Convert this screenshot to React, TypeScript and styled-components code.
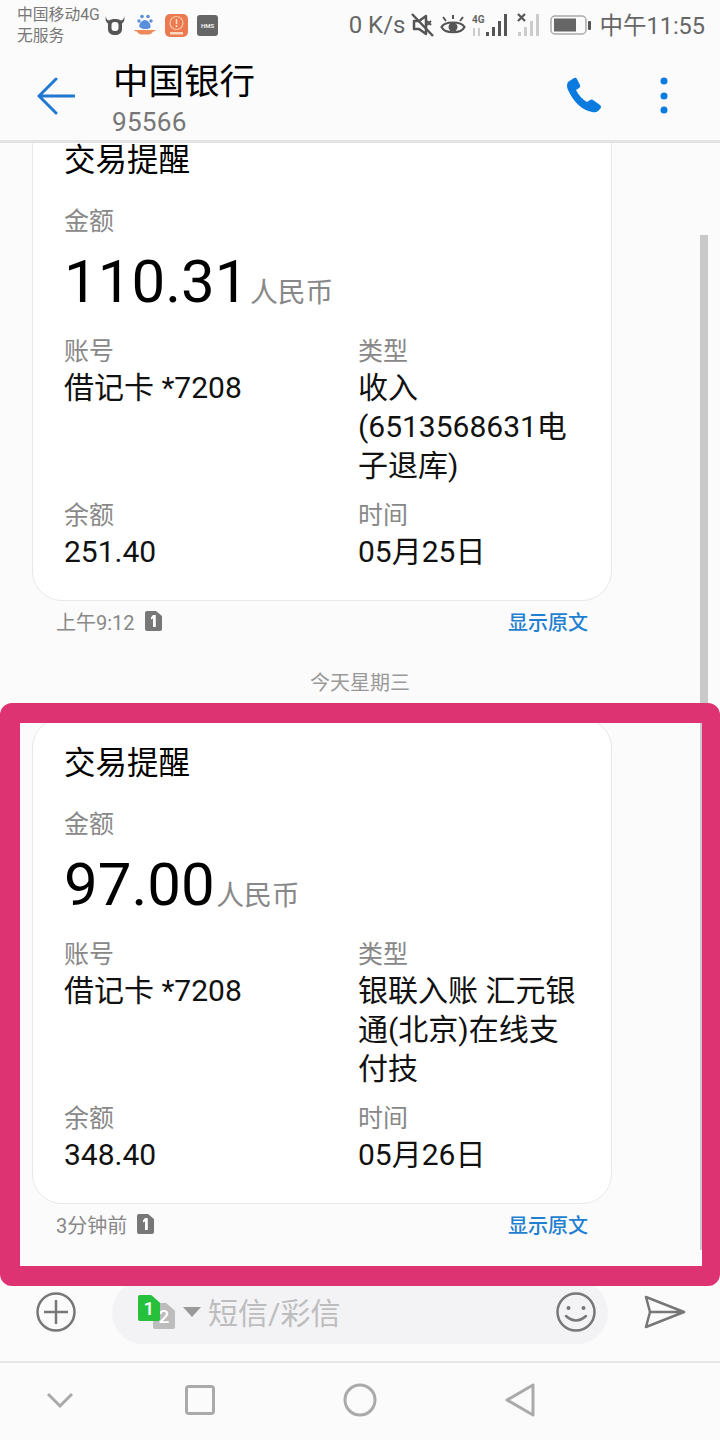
import { createGlobalStyle, styled } from "styled-components";

const GlobalStyle = createGlobalStyle`
  html, body {
    margin: 0;
    padding: 0;
    background: #fbfbfb;
  }
  * {
    box-sizing: border-box;
  }
`;

const Screen = styled.div`
  position: relative;
  display: flex;
  flex-direction: column;
  width: 720px;
  height: 1440px;
  overflow: hidden;
  background: #fbfbfb;
  color: #000;
  font-family: Roboto, "Noto Sans CJK SC", sans-serif;
`;

const StatusBar = styled.div`
  display: flex;
  align-items: center;
  flex: none;
  height: 52px;
  padding: 0 15px 0 17px;
  color: #666;
`;
const Carrier = styled.div`
  width: 88px;
  font-size: 15.800px;
  line-height: 21px;
  color: #777;
  margin-top: -2px;
  white-space: nowrap;
`;
const AppIcons = styled.div`
  display: flex;
  align-items: center;
  gap: 9px;
  margin-top: -2px;
`;
const StatusRight = styled.div`
  display: flex;
  align-items: center;
  margin-left: auto;
  margin-top: -2px;
`;
const Speed = styled.span`
  font-size: 24px;
  margin-right: 6px;
`;
const Clock = styled.span`
  font-size: 23.5px;
  margin: 0 0 3px 7px;
`;
const HmsBadge = styled.div`
  display: flex;
  align-items: center;
  justify-content: center;
  width: 21px;
  height: 21px;
  border-radius: 3px;
  background: #666;
  color: #eee;
  font-size: 6px;
  font-weight: 700;
`;

const Header = styled.div`
  display: flex;
  align-items: center;
  flex: none;
  height: 88px;
  padding: 0 52px 0 37px;
`;
const BackButton = styled.div`
  display: flex;
  width: 75px;
`;
const TitleBlock = styled.div`
  display: flex;
  flex-direction: column;
  margin-top: 1px;
`;
const Title = styled.div`
  margin-left: 1px;
  font-size: 35.5px;
  line-height: 50px;
`;
const Number = styled.div`
  font-size: 26.2px;
  line-height: 30px;
  color: #777;
  letter-spacing: 0.2px;
`;
const HeaderActions = styled.div`
  display: flex;
  align-items: center;
  gap: 57px;
  margin-left: auto;
`;
const Divider = styled.div`
  flex: none;
  height: 3px;
  background: #e3e3e3;
`;

const Messages = styled.div`
  position: relative;
  flex: 1;
  min-height: 0;
  overflow: hidden;
  padding-top: 1px;
`;
const Thread = styled.div`
  display: flex;
  flex-direction: column;
  width: 580px;
  margin: -29px 0 0 32px;
`;
const Card = styled.div`
  height: 486px;
  padding: 23px 0 0 31px;
  background: #fff;
  border: 1px solid #e8e8e8;
  border-radius: 30px;
`;
const CardTitle = styled.div`
  font-size: 31.500px;
  line-height: 44px;
`;
const Label = styled.div`
  font-size: 25px;
  line-height: 35px;
  color: #888;
`;
const AmountLabel = styled(Label)`
  margin-top: 21px;
`;
const Amount = styled.div`
  display: flex;
  align-items: baseline;
  height: 72px;
  margin-top: 7px;
  font-size: 60px;
  line-height: 72px;
`;
const Currency = styled.span`
  margin-left: 1.500px;
  font-size: 27.800px;
  color: #888;
`;
const Fields = styled.div`
  display: grid;
  grid-template-columns: 294px 222px;
  row-gap: 12px;
  margin-top: 16px;
`;
const Value = styled.div`
  margin-top: -1px;
  font-size: 30px;
  line-height: 39.200px;
  color: #111;
`;
const MetaRow = styled.div`
  display: flex;
  align-items: center;
  height: 40px;
  padding: 0 24px;
  font-size: 20px;
  color: #888;
`;
const MetaTime = styled.span`
  margin-right: 10px;
`;
const ShowOriginal = styled.span`
  margin-left: auto;
  color: #1f7fd0;
  font-weight: 500;
`;
const DateRow = styled.div`
  height: 36px;
  margin: 24px -76px 17px 0;
  font-size: 20px;
  line-height: 36px;
  text-align: center;
  color: #999;
`;
const Scrollbar = styled.div`
  position: absolute;
  top: 92px;
  right: 12px;
  width: 8px;
  height: 1015px;
  background: #c9c9c9;
`;

const Composer = styled.div`
  display: flex;
  align-items: center;
  flex: none;
  height: 80px;
  padding: 0 34px 18px 36px;
`;
const Pill = styled.div`
  display: flex;
  align-items: center;
  flex: none;
  width: 496px;
  height: 63px;
  margin-left: 36px;
  padding: 0 12px 0 26px;
  border-radius: 31px;
  background: #f3f3f5;
`;
const SimPicker = styled.div`
  position: relative;
  flex: none;
  width: 37px;
  height: 34px;
`;
const SimTag = styled.div<{ $second?: boolean }>`
  position: absolute;
  top: ${(p) => (p.$second ? "8px" : "0")};
  left: ${(p) => (p.$second ? "15px" : "0")};
  display: flex;
  align-items: center;
  justify-content: center;
  width: 22px;
  height: 26px;
  border-radius: 2px;
  clip-path: polygon(0 0, 60% 0, 100% 30%, 100% 100%, 0 100%);
  background: ${(p) => (p.$second ? "#bdbdbd" : "#27c03c")};
  color: #fff;
  font-size: 19px;
  font-weight: 500;
`;
const Caret = styled.div`
  flex: none;
  width: 0;
  height: 0;
  margin: 0 7px 0 8px;
  border-left: 9px solid transparent;
  border-right: 9px solid transparent;
  border-top: 10px solid #999;
`;
const Placeholder = styled.span`
  margin-bottom: 3px;
  font-size: 30px;
  color: #bdbdbd;
`;
const SmileButton = styled.div`
  display: flex;
  margin-left: auto;
`;
const SendButton = styled.div`
  display: flex;
  flex: none;
  margin-left: 36px;
`;

const NavBar = styled.div`
  display: grid;
  grid-template-columns: 120px repeat(3, 160px);
  justify-content: start;
  justify-items: center;
  align-items: center;
  flex: none;
  height: 79px;
  padding: 0 0 3px;
  border-top: 2px solid #e6e6e6;
`;

const Highlight = styled.div`
  position: absolute;
  top: 703px;
  left: 0;
  width: 720px;
  height: 583px;
  border: solid #dd3372;
  border-width: 20px 18px 20px 20px;
  border-radius: 12px;
`;

function SimIcon() {
  return (
    <svg width="18" height="20" viewBox="0 0 18 20">
      <path d="M2 0h9l6 5v13a2 2 0 0 1-2 2H2a2 2 0 0 1-2-2V2a2 2 0 0 1 2-2z" fill="#777" />
      <path d="M8 4h2.800v12H8V7.600L6 8.400V6.400z" fill="#fff" />
    </svg>
  );
}

function TransactionCard({
  amount,
  type,
  balance,
  date,
}: {
  amount: string;
  type: string;
  balance: string;
  date: string;
}) {
  return (
    <Card>
      <CardTitle>交易提醒</CardTitle>
      <AmountLabel>金额</AmountLabel>
      <Amount>
        {amount}
        <Currency>人民币</Currency>
      </Amount>
      <Fields>
        <div>
          <Label>账号</Label>
          <Value>借记卡 *7208</Value>
        </div>
        <div>
          <Label>类型</Label>
          <Value>{type}</Value>
        </div>
        <div>
          <Label>余额</Label>
          <Value>{balance}</Value>
        </div>
        <div>
          <Label>时间</Label>
          <Value>{date}</Value>
        </div>
      </Fields>
    </Card>
  );
}

export default function App() {
  return (
    <Screen>
      <GlobalStyle />
      <StatusBar>
        <Carrier>
          中国移动4G
          <br />
          无服务
        </Carrier>
        <AppIcons>
          <svg width="20" height="20" viewBox="0 0 20 20">
            <path
              d="M1 1c0 3 1 4 3 4.500C5.500 4.500 7.500 4 10 4s4.500.5 6 1.500C18 5 19 4 19 1c1 3 .5 6-2 7.500V14c0 4-3 6-7 6s-7-2-7-6V8.500C.5 7 0 4 1 1z"
              fill="#555"
            />
            <rect x="6.500" y="7" width="7" height="9" rx="3" fill="#fbfbfb" />
          </svg>
          <svg width="22" height="22" viewBox="0 0 22 22">
            <circle cx="8" cy="2.500" r="1.800" fill="#5b8fdc" />
            <circle cx="14" cy="2.500" r="1.800" fill="#5b8fdc" />
            <circle cx="5" cy="7" r="1.700" fill="#5b8fdc" />
            <circle cx="17" cy="7" r="1.700" fill="#5b8fdc" />
            <path d="M11 6c3 0 6 4 5.500 7S7 15.500 5.500 13 8 6 11 6z" fill="#5b8fdc" />
            <path d="M0 16h22c-1 1-1.500 1.500-3 1.500-1 2-3 3-4 3H7c-1 0-3-1-4-3C1.500 17.500 1 17 0 16z" fill="#ee8a5a" />
          </svg>
          <svg width="23" height="23" viewBox="0 0 23 23">
            <rect width="23" height="23" rx="5" fill="#ec7a50" />
            <circle cx="11.500" cy="9" r="6.500" fill="none" stroke="#f8c9a8" strokeWidth="1.200" />
            <path d="M11.500 5v5" stroke="#f8e0cc" strokeWidth="1.500" />
            <circle cx="11.500" cy="12" r="1" fill="#f8e0cc" />
            <rect x="5" y="18" width="13" height="2.500" fill="#f8d9c0" />
          </svg>
          <HmsBadge>HMS</HmsBadge>
        </AppIcons>
        <StatusRight>
          <Speed>0 K/s</Speed>
          <svg width="24" height="26" viewBox="0 0 24 26">
            <path d="M3 9h5l7-5v18l-7-5H3z" fill="none" stroke="#555" strokeWidth="2.500" strokeLinejoin="round" />
            <path d="M1 2l21 22" stroke="#555" strokeWidth="2.500" />
            <path d="M20 9l-4 4m0-4l4 4" stroke="#555" strokeWidth="2" />
          </svg>
          <svg width="26" height="22" viewBox="0 0 26 22" style={{ marginLeft: 5 }}>
            <path d="M1.500 13C5 7 21 7 24.500 13 21 20 5 20 1.500 13z" fill="none" stroke="#555" strokeWidth="2.200" />
            <circle cx="13" cy="13" r="4.500" fill="#555" />
            <path d="M3 3l3 4M13 1v4M23 3l-3 4" stroke="#555" strokeWidth="2" />
          </svg>
          <svg width="38" height="24" viewBox="0 0 38 24" style={{ marginLeft: 6 }}>
            <text x="0" y="10" fontSize="10" fontWeight="700" fill="#666" fontFamily="Roboto">
              4G
            </text>
            <rect x="1" y="15" width="2" height="8" fill="#ccc" />
            <rect x="6" y="15" width="2" height="8" fill="#ccc" />
            <rect x="14" y="19" width="3" height="4" fill="#555" />
            <rect x="20" y="14" width="3" height="9" fill="#555" />
            <rect x="26" y="8" width="3" height="15" fill="#555" />
            <rect x="32" y="1" width="3" height="22" fill="#555" />
          </svg>
          <svg width="24" height="24" viewBox="0 0 24 24" style={{ marginLeft: 7 }}>
            <path d="M1 1l7 7m0-7l-7 7" stroke="#555" strokeWidth="2.200" />
            <rect x="1" y="19" width="3" height="4" fill="#ccc" />
            <rect x="7" y="14" width="3" height="9" fill="#ccc" />
            <rect x="13" y="8" width="3" height="15" fill="#ccc" />
            <rect x="19" y="1" width="3" height="22" fill="#ccc" />
          </svg>
          <svg width="42" height="20" viewBox="0 0 42 20" style={{ marginLeft: 9 }}>
            <rect x="1" y="1" width="35" height="18" rx="4" fill="none" stroke="#aaa" strokeWidth="1.500" />
            <rect x="4" y="3.500" width="22" height="13" fill="#666" />
            <rect x="38" y="6" width="3" height="9" rx="1" fill="#555" />
          </svg>
          <Clock>中午11:55</Clock>
        </StatusRight>
      </StatusBar>
      <Header>
        <BackButton>
          <svg width="38" height="38" viewBox="0 0 38 38">
            <path d="M37 19H2M19 2L2 19l17 17" fill="none" stroke="#1f78d2" strokeWidth="3" strokeLinecap="round" strokeLinejoin="round" />
          </svg>
        </BackButton>
        <TitleBlock>
          <Title>中国银行</Title>
          <Number>95566</Number>
        </TitleBlock>
        <HeaderActions>
          <svg width="38" height="38" viewBox="0 0 38 38">
            <path
              d="M3 5l6-4q2-1 3 1l3 6q1 2-1 3l-3 2q4 8 11 12l3-2q2-1 3 0l7 5q2 2 0 4l-2 2q-2 2-6 1Q12 32 3 13 1 8 3 5z"
              fill="#0b7be0"
            />
          </svg>
          <svg width="8" height="38" viewBox="0 0 8 38">
            <circle cx="4" cy="4" r="3.500" fill="#0b7be0" />
            <circle cx="4" cy="19" r="3.500" fill="#0b7be0" />
            <circle cx="4" cy="33" r="3.500" fill="#0b7be0" />
          </svg>
        </HeaderActions>
      </Header>
      <Divider />
      <Messages>
        <Thread>
          <TransactionCard amount="110.31" type="收入(6513568631电子退库)" balance="251.40" date="05月25日" />
          <MetaRow>
            <MetaTime>上午9:12</MetaTime>
            <SimIcon />
            <ShowOriginal>显示原文</ShowOriginal>
          </MetaRow>
          <DateRow>今天星期三</DateRow>
          <TransactionCard amount="97.00" type="银联入账 汇元银通(北京)在线支付技" balance="348.40" date="05月26日" />
          <MetaRow>
            <MetaTime>3分钟前</MetaTime>
            <SimIcon />
            <ShowOriginal>显示原文</ShowOriginal>
          </MetaRow>
        </Thread>
        <Scrollbar />
      </Messages>
      <Composer>
        <svg width="40" height="40" viewBox="0 0 40 40">
          <circle cx="20" cy="20" r="18.500" fill="none" stroke="#777" strokeWidth="2.500" />
          <path d="M20 8v24M8 20h24" stroke="#777" strokeWidth="2.500" />
        </svg>
        <Pill>
          <SimPicker>
            <SimTag $second>2</SimTag>
            <SimTag>1</SimTag>
          </SimPicker>
          <Caret />
          <Placeholder>短信/彩信</Placeholder>
          <SmileButton>
            <svg width="40" height="40" viewBox="0 0 40 40">
              <circle cx="20" cy="20" r="18.500" fill="none" stroke="#777" strokeWidth="2.500" />
              <circle cx="12.500" cy="16" r="2" fill="#777" />
              <circle cx="27.500" cy="16" r="2" fill="#777" />
              <path d="M10 24q10 9 20 0" fill="none" stroke="#777" strokeWidth="2.500" strokeLinecap="round" />
            </svg>
          </SmileButton>
        </Pill>
        <SendButton>
          <svg width="42" height="34" viewBox="0 0 42 34">
            <path d="M2 2l38 15L2 32l4-15z M6 17h34" fill="none" stroke="#777" strokeWidth="2.500" strokeLinejoin="round" />
          </svg>
        </SendButton>
      </Composer>
      <NavBar>
        <svg width="28" height="18" viewBox="0 0 28 18">
          <path d="M2 3l12 12L26 3" fill="none" stroke="#aaa" strokeWidth="3" />
        </svg>
        <svg width="30" height="30" viewBox="0 0 30 30">
          <rect x="1.500" y="1.500" width="27" height="27" rx="2.500" fill="none" stroke="#aaa" strokeWidth="3" />
        </svg>
        <svg width="34" height="34" viewBox="0 0 34 34">
          <circle cx="17" cy="17" r="15" fill="none" stroke="#aaa" strokeWidth="3" />
        </svg>
        <svg width="30" height="34" viewBox="0 0 30 34">
          <path d="M28 2v30L2 17z" fill="none" stroke="#aaa" strokeWidth="3" strokeLinejoin="round" />
        </svg>
      </NavBar>
      <Highlight />
    </Screen>
  );
}
